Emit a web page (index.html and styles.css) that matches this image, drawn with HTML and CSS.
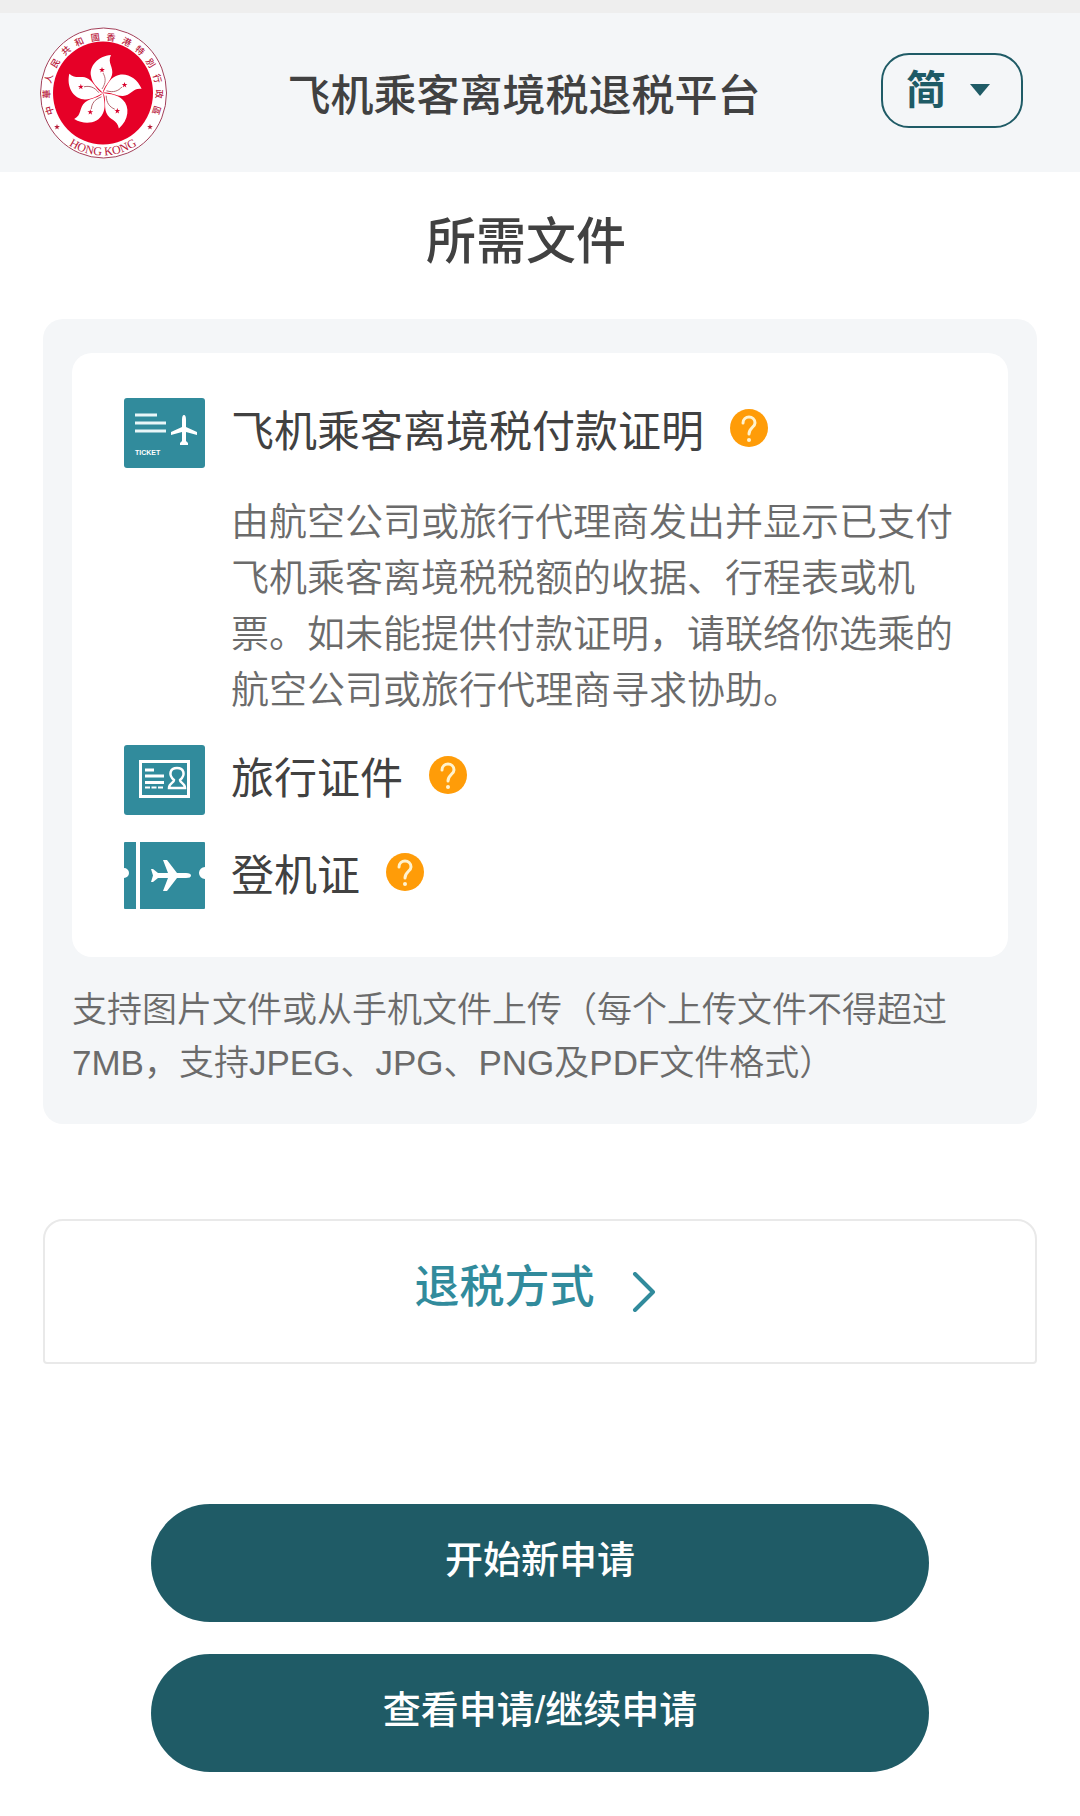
FILE: index.html
```
<!DOCTYPE html>
<html lang="zh-CN">
<head>
  <meta charset="UTF-8">
  <meta name="viewport" content="width=device-width, initial-scale=1.0">
  <title>飞机乘客离境税退税平台</title>
  <link rel="stylesheet" href="styles.css">
</head>
<body>
  <header class="header">
    <svg class="logo" viewBox="20 17 127 131" aria-hidden="true">
      <defs>
        <path id="ring" d="M21 83 A62 62.500 0 0 0 145 83"/>
        <path id="star" d="M0 -3 L0.7 -0.9 L2.9 -0.9 L1.1 0.4 L1.8 2.4 L0 1.2 L-1.8 2.4 L-1.1 0.4 L-2.9 -0.9 L-0.7 -0.9 Z"/>
        <g id="petal">
          <path fill="#fff" d="M91 45 C78 46 69 56 71 66 C72 73 77 77 83 83 C83 77 90 72 92 65 C94 57 87 53 91 45 Z"/>
          <path fill="none" stroke="#a8505a" stroke-width="0.8" d="M83 63 C86 68 86 73 82 79"/>
          <use href="#star" x="82" y="60" fill="#d9002b"/>
        </g>
      </defs>
      <ellipse cx="83.5" cy="83" rx="63" ry="65" fill="#fff" stroke="#a3405a" stroke-width="1"/>
      <ellipse cx="83" cy="83" rx="50" ry="51.5" fill="#e60027"/>
      <use href="#petal"/>
      <use href="#petal" transform="rotate(72 83 83)"/>
      <use href="#petal" transform="rotate(144 83 83)"/>
      <use href="#petal" transform="rotate(216 83 83)"/>
      <use href="#petal" transform="rotate(288 83 83)"/>
      <g class="logo-name">
        <text x="83" y="30" transform="rotate(-108 83 83)">中</text>
        <text x="83" y="30" transform="rotate(-91 83 83)">華</text>
        <text x="83" y="30" transform="rotate(-75 83 83)">人</text>
        <text x="83" y="30" transform="rotate(-58 83 83)">民</text>
        <text x="83" y="30" transform="rotate(-41 83 83)">共</text>
        <text x="83" y="30" transform="rotate(-25 83 83)">和</text>
        <text x="83" y="30" transform="rotate(-8 83 83)">國</text>
        <text x="83" y="30" transform="rotate(8 83 83)">香</text>
        <text x="83" y="30" transform="rotate(25 83 83)">港</text>
        <text x="83" y="30" transform="rotate(41 83 83)">特</text>
        <text x="83" y="30" transform="rotate(58 83 83)">別</text>
        <text x="83" y="30" transform="rotate(75 83 83)">行</text>
        <text x="83" y="30" transform="rotate(91 83 83)">政</text>
        <text x="83" y="30" transform="rotate(108 83 83)">區</text>
      </g>
      <text class="logo-city"><textPath href="#ring" startOffset="50%">HONG KONG</textPath></text>
      <use href="#star" x="37" y="117" fill="#b8203c"/>
      <use href="#star" x="130" y="117" fill="#b8203c"/>
    </svg>
    <p class="site-title">飞机乘客离境税退税平台</p>
    <div class="lang">
      <select class="lang-select" aria-label="语言">
        <option>简</option>
        <option>繁</option>
        <option>EN</option>
      </select>
      <svg class="lang-arrow" viewBox="0 0 20 12" aria-hidden="true"><path d="M0 0 H20 L10 12 Z"/></svg>
    </div>
  </header>

  <main class="main">
    <h1 class="page-title">所需文件</h1>

    <section class="panel">
      <ul class="doc-list">
        <li class="doc">
          <svg class="doc-icon" viewBox="0 0 81 70" aria-hidden="true">
            <rect width="81" height="70" rx="3" fill="#318b9c"/>
            <path d="M11 17 H33 M11 25 H42 M11 33 H42" stroke="#e9f6f8" stroke-width="3"/>
            <path fill="#fff" d="M60 17 Q62 17 62 22 V29 L73 34 V37 L62 34 V43 L64 45 V47 H56 V45 L58 43 V34 L47 37 V34 L58 29 V22 Q58 17 60 17 Z"/>
            <text class="ticket-text" x="11" y="57">TICKET</text>
          </svg>
          <div class="doc-body">
            <div class="doc-head">
              <h2 class="doc-title">飞机乘客离境税付款证明</h2>
              <button class="help" type="button" aria-label="说明">
                <svg viewBox="0 0 38 38"><circle cx="19" cy="19" r="19"/><path d="M13 14 C13 6 25 6 25 14 C25 18 19 19 19 25"/><circle class="dot" cx="19" cy="31" r="2"/></svg>
              </button>
            </div>
            <p class="doc-text">由航空公司或旅行代理商发出并显示已支付飞机乘客离境税税额的收据、行程表或机票。如未能提供付款证明，请联络你选乘的航空公司或旅行代理商寻求协助。</p>
          </div>
        </li>
        <li class="doc">
          <svg class="doc-icon" viewBox="0 0 81 70" aria-hidden="true">
            <rect width="81" height="70" rx="3" fill="#318b9c"/>
            <rect x="16.500" y="16.500" width="48" height="35" fill="none" stroke="#fff" stroke-width="3"/>
            <path d="M21 25 H30 M21 31 H40 M21 37.500 H40" stroke="#fff" stroke-width="3"/>
            <path d="M21 42.500 H40" stroke="#fff" stroke-width="2" stroke-dasharray="5 1.500"/>
            <path fill="none" stroke="#fff" stroke-width="2.500" d="M50 35 C44 30 46 23 53 23 C60 23 62 30 56 35 C56 38 61 38 61 43 H45 C45 38 50 38 50 35 Z"/>
          </svg>
          <div class="doc-body">
            <div class="doc-head">
              <h2 class="doc-title">旅行证件</h2>
              <button class="help" type="button" aria-label="说明">
                <svg viewBox="0 0 38 38"><circle cx="19" cy="19" r="19"/><path d="M13 14 C13 6 25 6 25 14 C25 18 19 19 19 25"/><circle class="dot" cx="19" cy="31" r="2"/></svg>
              </button>
            </div>
          </div>
        </li>
        <li class="doc">
          <svg class="doc-icon" viewBox="0 0 81 70" aria-hidden="true">
            <path fill="#318b9c" d="M1 0 H12 V67 H1 Q0 67 0 66 V36 A5 5 0 0 0 0 26 V1 Q0 0 1 0 Z M16 0 H80 Q81 0 81 1 V25 A6 6 0 0 0 81 37 V66 Q81 67 80 67 H16 Z"/>
            <path fill="#fff" d="M67 33.500 Q67 36 62 36 H53 L43 49 H39 L44 36 H34 L29 40 H27 L29 33.500 L27 27 H29 L34 31 H44 L39 18 H43 L53 31 H62 Q67 31 67 33.500 Z"/>
          </svg>
          <div class="doc-body">
            <div class="doc-head">
              <h2 class="doc-title">登机证</h2>
              <button class="help" type="button" aria-label="说明">
                <svg viewBox="0 0 38 38"><circle cx="19" cy="19" r="19"/><path d="M13 14 C13 6 25 6 25 14 C25 18 19 19 19 25"/><circle class="dot" cx="19" cy="31" r="2"/></svg>
              </button>
            </div>
          </div>
        </li>
      </ul>
      <p class="note">支持图片文件或从手机文件上传（每个上传文件不得超过7MB，支持JPEG、JPG、PNG及PDF文件格式）</p>
    </section>

    <a class="method" href="#">
      <span>退税方式</span>
      <svg class="chevron" viewBox="0 0 24 40" aria-hidden="true"><path d="M3 2 L21 20 L3 38"/></svg>
    </a>

    <div class="actions">
      <button class="btn" type="button">开始新申请</button>
      <button class="btn" type="button">查看申请/继续申请</button>
    </div>
  </main>
</body>
</html>
```

FILE: styles.css
```
* {
  box-sizing: border-box;
}
body {
  margin: 0;
  border-top: 13px solid #eee;
  background: #fff;
  color: #414141;
  font-family: "Liberation Sans", "Noto Sans CJK SC", sans-serif;
}
h1, h2, p, ul {
  margin: 0;
  padding: 0;
}
.header {
  display: flex;
  align-items: center;
  padding: 14px 57px 14px 40px;
  background: #f4f6f8;
}
.logo {
  width: 127px;
  height: 131px;
  overflow: visible;
}
.logo-name {
  fill: #b8203c;
  font-family: "Noto Sans CJK TC", sans-serif;
  font-size: 9px;
  font-weight: 500;
  text-anchor: middle;
}
.logo-city {
  fill: #b8203c;
  font-family: "Liberation Serif", serif;
  font-size: 12px;
  text-anchor: middle;
}
.site-title {
  flex: 1;
  padding-top: 6px;
  font-size: 43px;
  font-weight: 500;
  line-height: 60px;
  text-align: center;
}
.lang {
  position: relative;
  margin-bottom: 4px;
}
.lang-select {
  appearance: none;
  display: block;
  width: 142px;
  height: 75px;
  padding: 0 0 2px 23px;
  border: 2px solid #1f5b66;
  border-radius: 28px;
  background: transparent;
  color: #1f5b66;
  font-family: inherit;
  font-size: 40px;
  font-weight: bold;
}
.lang-arrow {
  position: absolute;
  top: 31px;
  right: 33px;
  width: 20px;
  height: 12px;
  fill: #1f5b66;
  pointer-events: none;
}
.main {
  padding: 0 43px 44px;
}
.page-title {
  padding: 40px 28px 47px 0;
  font-size: 50px;
  font-weight: 500;
  line-height: 60px;
  text-align: center;
}
.panel {
  padding: 34px 29px 35px;
  border-radius: 20px;
  background: #f4f6f8;
}
.doc-list {
  display: flex;
  flex-direction: column;
  gap: 27px;
  padding: 45px 30px 45px 52px;
  border-radius: 20px;
  background: #fff;
  list-style: none;
}
.doc {
  display: flex;
  gap: 26px;
}
.doc-icon {
  flex: none;
  width: 81px;
  height: 70px;
}
.ticket-text {
  fill: #fff;
  font-size: 7px;
  font-weight: bold;
}
.doc-body {
  flex: 1;
}
.doc-head {
  display: flex;
  align-items: center;
  gap: 26px;
  height: 68px;
}
.doc-title {
  font-size: 43px;
  font-weight: 400;
  line-height: 60px;
}
.help {
  width: 38px;
  height: 38px;
  margin-bottom: 9px;
  padding: 0;
  border: none;
  background: none;
  cursor: pointer;
}
.help svg {
  display: block;
  fill: #ff9c08;
}
.help path {
  fill: none;
  stroke: #fff3cf;
  stroke-width: 3;
  stroke-linecap: round;
}
.help .dot {
  fill: #fff3cf;
}
.doc-text {
  margin-top: 28px;
  color: #6b6b6b;
  font-size: 38px;
  font-weight: 350;
  line-height: 56px;
}
.note {
  margin-top: 26px;
  color: #6b6b6b;
  font-size: 35px;
  font-weight: 350;
  line-height: 53px;
}
.method {
  display: flex;
  align-items: center;
  justify-content: center;
  gap: 37px;
  height: 145px;
  margin-top: 95px;
  padding: 0 10px 16px 0;
  border: 2px solid #e9e9e9;
  border-radius: 20px 20px 4px 4px;
  color: #318b9c;
  font-size: 45px;
  font-weight: 500;
  text-decoration: none;
}
.chevron {
  width: 24px;
  height: 40px;
  margin-top: 16px;
  fill: none;
  stroke: #318b9c;
  stroke-width: 4;
  stroke-linecap: round;
  stroke-linejoin: round;
}
.actions {
  display: flex;
  flex-direction: column;
  gap: 32px;
  margin: 140px 108px 0;
}
.btn {
  height: 118px;
  padding: 0 20px 14px;
  border: none;
  border-radius: 59px;
  background: #1f5b66;
  color: #fff;
  font-family: inherit;
  font-size: 38px;
  font-weight: 500;
  cursor: pointer;
}
```
